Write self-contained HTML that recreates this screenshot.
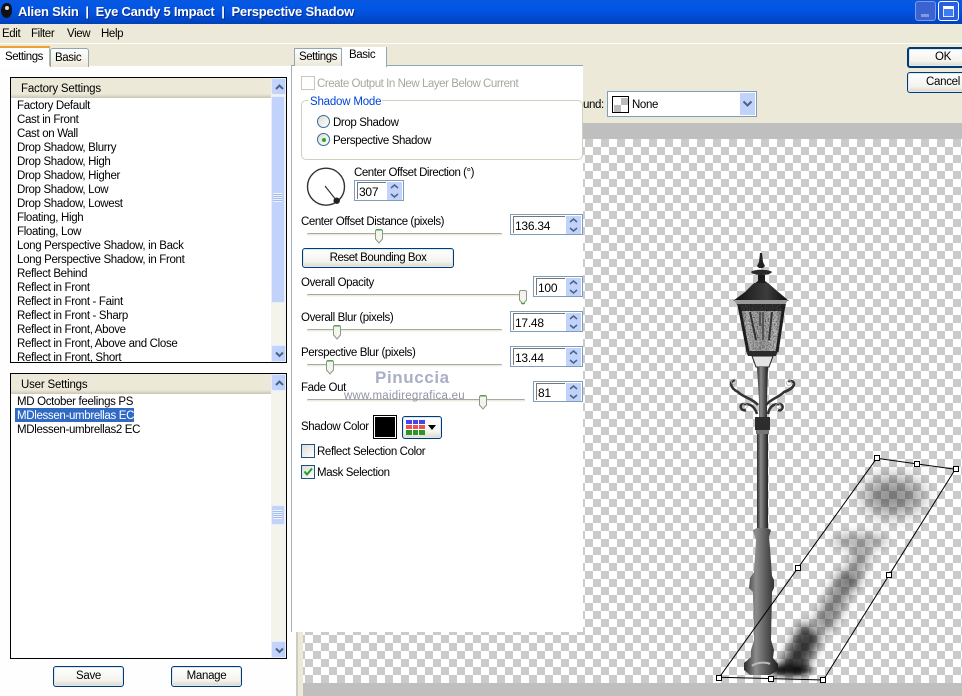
<!DOCTYPE html>
<html><head><meta charset="utf-8"><style>
html,body{margin:0;padding:0;width:962px;height:696px;overflow:hidden;background:#ece9d8}
body{position:relative;font-family:"Liberation Sans",sans-serif;font-size:11.5px;color:#000}
div,span.t{position:absolute;box-sizing:border-box}
.t{white-space:nowrap;line-height:14px;height:14px;margin-top:1px;letter-spacing:-.38px}
.r{left:17px;white-space:nowrap;line-height:14px;height:14px;position:absolute;margin-top:1px;letter-spacing:-.33px}
.btn{border:1px solid #003c74;border-radius:3px;background:linear-gradient(#fff,#f4f3ee 70%,#dcd8c8);text-align:center;line-height:19px;box-shadow:inset 0 0 0 1px #dce7f5;letter-spacing:-.3px}
.sb{background:linear-gradient(90deg,#c3d5fd,#bcd0fb);border:1px solid #e6eefc;border-radius:2px;width:15px;height:17px;left:271px;color:#4d6185;text-align:center}
.sb svg{position:absolute;left:3px;top:5px}
.trk{height:3px;background:#ecebe0;border-top:1px solid #a8a89c;border-bottom:1px solid #f7f7f2;border-radius:2px}
.spin{border:1px solid #7f9db9;background:#fff;height:21px}
.spin i{position:absolute;left:2px;top:1px;right:17px;bottom:1px;border-top:1px solid #777;border-left:1px solid #777;font-style:normal;font-size:12px;line-height:19px;padding-left:1px;letter-spacing:-.25px}
.spin b{position:absolute;right:1px;width:15px;height:9px;background:#c1d3fb}
.spin b svg{position:absolute;left:3px;top:2px}
.cb{width:14px;height:14px;border:1px solid #1c5180;background:linear-gradient(135deg,#dcdcd7,#fff)}
</style></head><body>

<!-- title bar -->
<div style="left:0;top:0;width:962px;height:24px;background:linear-gradient(#0a58dc 0,#0258e6 4px,#0355e4 10px,#0147c8 20px,#0140b8 24px)"></div>
<div style="left:1px;top:3px;width:11px;height:15px;background:#111;border-radius:50% 40% 50% 50%"></div>
<div style="left:5px;top:6px;width:4px;height:4px;background:#ddd;border-radius:50%"></div>
<span class="t" style="left:18px;top:3px;font-size:13px;line-height:16px;height:16px;font-weight:bold;color:#fff;letter-spacing:-.22px;text-shadow:1px 1px 0 #0a2f90">Alien Skin&nbsp; |&nbsp; Eye Candy 5 Impact&nbsp; |&nbsp; Perspective Shadow</span>
<div style="left:915px;top:1px;width:21px;height:20px;background:#3a62d0;border:1px solid #7d9be4;border-radius:3px"><div style="left:5px;top:12px;width:8px;height:3px;background:#7f9be0"></div></div>
<div style="left:938px;top:1px;width:21px;height:20px;background:#2a5fe0;border:1px solid #fff;border-radius:3px"><div style="left:4px;top:4px;width:11px;height:11px;border:1px solid #dfe8ff;border-top:3px solid #fff;background:#3e7cf2"></div></div>

<!-- menu -->
<span class="t" style="left:2px;top:26px">Edit</span>
<span class="t" style="left:31px;top:26px">Filter</span>
<span class="t" style="left:67px;top:26px">View</span>
<span class="t" style="left:101px;top:26px">Help</span>
<div style="left:0;top:43px;width:962px;height:1px;background:#fff"></div>

<!-- preview -->
<div style="left:298px;top:123px;width:664px;height:573px;background:#bfbfbf"></div>
<div style="left:303px;top:139px;width:659px;height:544px;background:repeating-conic-gradient(#cbcbcb 0 25%,#fff 0 50%) 2px 0/16px 16px"></div>
<div style="left:298px;top:632px;width:5px;height:64px;background:#ece9d8"></div>

<svg width="962" height="696" style="position:absolute;left:0;top:0" viewBox="0 0 962 696">
<defs>
<filter id="b1" x="-60%" y="-60%" width="220%" height="220%"><feGaussianBlur stdDeviation="5"/></filter>
<filter id="b2" x="-60%" y="-60%" width="220%" height="220%"><feGaussianBlur stdDeviation="9"/></filter>
<filter id="b3" x="-50%" y="-50%" width="200%" height="200%"><feGaussianBlur stdDeviation="3"/></filter>
<filter id="n" x="0" y="0" width="100%" height="100%"><feTurbulence type="fractalNoise" baseFrequency=".75" numOctaves="2" seed="4"/><feColorMatrix values="0 0 0 0 0 0 0 0 0 0 0 0 0 0 0 1.800 0 0 0 -.55"/><feComposite in2="SourceGraphic" operator="in"/><feMerge><feMergeNode in="SourceGraphic"/><feMergeNode/></feMerge></filter>
<linearGradient id="pole" x1="0" x2="1" y1="0" y2="0"><stop offset="0" stop-color="#2c2c2c"/><stop offset=".35" stop-color="#8c8c8c"/><stop offset=".65" stop-color="#5a5a5a"/><stop offset="1" stop-color="#1e1e1e"/></linearGradient>
<linearGradient id="roof" x1="0" x2="1" y1="0" y2="0"><stop offset="0" stop-color="#111"/><stop offset=".6" stop-color="#3c3c3c"/><stop offset="1" stop-color="#0c0c0c"/></linearGradient>
<linearGradient id="glass" x1="0" x2="1" y1="0" y2="0"><stop offset="0" stop-color="#777"/><stop offset=".2" stop-color="#c4c4c4"/><stop offset=".5" stop-color="#a8a8a8"/><stop offset=".8" stop-color="#c4c4c4"/><stop offset="1" stop-color="#666"/></linearGradient>
</defs>
<!-- shadow -->
<g fill="#000">
<path d="M778 670L802 622L822 636L804 672Z" opacity=".75" filter="url(#b1)"/>
<ellipse cx="790" cy="670" rx="22" ry="6" opacity=".85" filter="url(#b3)"/>
<path d="M812 624L840 570L858 580L830 634Z" opacity=".42" filter="url(#b1)"/>
<path d="M842 580L856 545L872 552L856 590Z" opacity=".34" filter="url(#b1)"/>
<ellipse cx="860" cy="541" rx="28" ry="8" opacity=".28" filter="url(#b1)"/>
<ellipse cx="893" cy="496" rx="30" ry="19" opacity=".42" filter="url(#b2)"/>
</g>
<!-- lamp -->
<path d="M760 253H762L763 262L765 266L763 268H759L757 266L759 262Z" fill="#222"/>
<path d="M751 272C753 269 769 269 772 272C770 276 753 276 751 272Z" fill="#2a2a2a"/>
<path d="M758 275H765L765 281L769 284H754L758 281Z" fill="#1c1c1c"/>
<path d="M754 283H768L776 290L789 301L761 300L733 301L745 292Z" fill="url(#roof)"/>
<path d="M734 300L788 300L785 305L737 305Z" fill="#999"/>
<path d="M738 304L785 304L777 354L748 354Z" fill="url(#glass)" filter="url(#n)"/>
<path d="M737 304L786 304L784 311L739 311Z" fill="#3a3a3a" filter="url(#n)"/>
<path d="M739 305L748 352M784 305L777 352" stroke="#1d1d1d" stroke-width="3" fill="none"/>
<path d="M750 312L756 340M772 312L769 340" stroke="#333" stroke-width="2" fill="none"/>
<path d="M760 312L760 326M763 312L763 340" stroke="#555" stroke-width="2" fill="none"/>
<path d="M746 351H778L776 356H748Z" fill="#2a2a2a"/>
<path d="M752 356H773L769 367H756Z" fill="#e4e4e4" stroke="#222"/>
<path d="M757 367H768L767 400V418H759V400Z" fill="url(#pole)"/>
<g fill="none" stroke="#333" stroke-width="2.600">
<path d="M758 405C752 398 744 398 738 392C730 388 729 381 735 380"/>
<path d="M766 405C772 398 778 398 784 392C796 388 797 380 788 381"/>
<path d="M757 414C754 404 748 404 744 404C738 404 741 412 746 410"/>
<path d="M768 414C770 404 776 404 780 404C785 405 782 412 778 410"/>
</g>
<g fill="none" stroke="#aaa" stroke-width=".8"><circle cx="734" cy="382" r="2.500"/><circle cx="789" cy="383" r="2.500"/><circle cx="745" cy="406" r="2.500"/><circle cx="778" cy="406" r="2.500"/></g>
<path d="M755 417H770V430H755Z" fill="#2d2d2d"/>
<path d="M756 430H769V434H756Z" fill="#777"/>
<path d="M757 434H768V528H757Z" fill="url(#pole)"/>
<path d="M753 530L757 528H767L771 530L769 537L770 548L771 562L772 576L774 580L774 588L772 592L771 640L774 650L773 658L778 664L778 670L770 675H750L744 670L744 663L751 657L751 650L754 640L753 592L749 588L750 578L754 572L755 556L756 540Z" fill="url(#pole)"/>
<path d="M744 664C752 658 770 657 778 664C776 672 768 675 758 675C750 675 745 670 744 664Z" fill="url(#pole)"/>
<path d="M752 666C756 662 766 662 770 664" stroke="#bbb" stroke-width="2" fill="none"/>
<!-- bounding box -->
<path d="M876.700 458.300L955.300 469.300L823.300 680L719.300 677.300Z" fill="none" stroke="#000"/>
<g fill="#fff" stroke="#000">
<rect x="874.500" y="455.500" width="5" height="5"/><rect x="914.500" y="461.500" width="5" height="5"/><rect x="953.500" y="466.500" width="5" height="5"/><rect x="886.500" y="572.500" width="5" height="5"/><rect x="820.500" y="677.500" width="5" height="5"/><rect x="768.500" y="676.500" width="5" height="5"/><rect x="716.500" y="675.500" width="5" height="5"/><rect x="795.500" y="565.500" width="5" height="5"/>
</g>
</svg>

<!-- background combo -->
<span class="t" style="left:583px;top:97px">und:</span>
<div style="left:607px;top:91px;width:150px;height:26px;background:#fff;border:1px solid #7f9db9"></div>
<div style="left:612px;top:96px;width:17px;height:17px;border:1px solid #000;background:linear-gradient(#bbb,#bbb) 8px 1px/7px 7px no-repeat,linear-gradient(#bbb,#bbb) 1px 8px/7px 7px no-repeat,#fff"></div>
<span class="t" style="left:632px;top:97px">None</span>
<div style="left:740px;top:93px;width:15px;height:22px;background:#c1d3fb"><svg width="11" height="8" style="position:absolute;left:2px;top:7px"><path d="M1.500 1.500L5.500 5.500L9.500 1.500" fill="none" stroke="#4d6185" stroke-width="2"/></svg></div>

<!-- OK / Cancel -->
<div class="btn" style="left:907px;top:47px;width:72px;height:21px;border-width:2px;line-height:17px">OK</div>
<div class="btn" style="left:907px;top:72px;width:72px;height:21px;line-height:19px;text-indent:18px;text-align:left">Cancel</div>

<!-- left pane -->
<div style="left:0;top:66px;width:296px;height:630px;background:#fefefe"></div>
<div style="left:296px;top:632px;width:2px;height:64px;background:#cfccbd"></div>
<div style="left:0;top:46px;width:50px;height:21px;background:#fff;border-top:2px solid #f0a030;border-right:1px solid #b4b4a8"></div>
<span class="t" style="left:5px;top:49px;letter-spacing:-.45px">Settings</span>
<div style="left:50px;top:48px;width:39px;height:19px;background:linear-gradient(#fff,#ece9d8);border:1px solid #91a7b4;border-bottom:0;border-radius:3px 3px 0 0"></div>
<span class="t" style="left:55px;top:50px">Basic</span>
<div style="left:0;top:66px;width:50px;height:1px;background:#fff"></div>

<!-- factory list -->
<div style="left:10px;top:77px;width:277px;height:286px;background:#fff;border:1px solid #000;overflow:hidden">
<div style="left:0;top:0;width:260px;height:20px;background:linear-gradient(#ece9d8,#ece9d8 80%,#c9c6b6)"></div>
<span class="t" style="left:10px;top:3px;letter-spacing:-.2px">Factory Settings</span>
<div style="left:260px;top:0;width:15px;height:284px;background:#f4f3ec"></div>
</div>
<div class="sb" style="top:78px"><svg width="9" height="7"><path d="M1 5L4.500 1.500L8 5" fill="none" stroke="#4d6185" stroke-width="2"/></svg></div>
<div style="left:271px;top:96px;width:14px;height:207px;background:#c1d3fb;border:1px solid #e6eefc;border-radius:2px"></div>
<div style="left:273px;top:193px;width:9px;height:9px;background:repeating-linear-gradient(#eef3ff 0 1px,#a5bbe8 1px 2px)"></div>
<div class="sb" style="top:345px"><svg width="9" height="7"><path d="M1 1.500L4.500 5L8 1.500" fill="none" stroke="#4d6185" stroke-width="2"/></svg></div>
<div style="left:11px;top:98px;width:260px;height:264px;overflow:hidden"><div style="left:-11px;top:-98px;width:280px;height:300px">
<span class="r" style="top:98px">Factory Default</span>
<span class="r" style="top:112px">Cast in Front</span>
<span class="r" style="top:126px">Cast on Wall</span>
<span class="r" style="top:140px">Drop Shadow, Blurry</span>
<span class="r" style="top:154px">Drop Shadow, High</span>
<span class="r" style="top:168px">Drop Shadow, Higher</span>
<span class="r" style="top:182px">Drop Shadow, Low</span>
<span class="r" style="top:196px">Drop Shadow, Lowest</span>
<span class="r" style="top:210px">Floating, High</span>
<span class="r" style="top:224px">Floating, Low</span>
<span class="r" style="top:238px">Long Perspective Shadow, in Back</span>
<span class="r" style="top:252px">Long Perspective Shadow, in Front</span>
<span class="r" style="top:266px">Reflect Behind</span>
<span class="r" style="top:280px">Reflect in Front</span>
<span class="r" style="top:294px">Reflect in Front - Faint</span>
<span class="r" style="top:308px">Reflect in Front - Sharp</span>
<span class="r" style="top:322px">Reflect in Front, Above</span>
<span class="r" style="top:336px">Reflect in Front, Above and Close</span>
<span class="r" style="top:350px">Reflect in Front, Short</span>
</div></div>

<!-- user list -->
<div style="left:10px;top:373px;width:277px;height:286px;background:#fff;border:1px solid #000;overflow:hidden">
<div style="left:0;top:0;width:260px;height:20px;background:linear-gradient(#ece9d8,#ece9d8 80%,#c9c6b6)"></div>
<span class="t" style="left:10px;top:3px;letter-spacing:-.2px">User Settings</span>
<div style="left:260px;top:0;width:15px;height:284px;background:#f4f3ec"></div>
</div>
<div class="sb" style="top:374px"><svg width="9" height="7"><path d="M1 5L4.500 1.500L8 5" fill="none" stroke="#4d6185" stroke-width="2"/></svg></div>
<div style="left:271px;top:505px;width:14px;height:20px;background:#c1d3fb;border:1px solid #e6eefc;border-radius:2px"></div>
<div style="left:273px;top:510px;width:9px;height:9px;background:repeating-linear-gradient(#eef3ff 0 1px,#a5bbe8 1px 2px)"></div>
<div class="sb" style="top:641px"><svg width="9" height="7"><path d="M1 1.500L4.500 5L8 1.500" fill="none" stroke="#4d6185" stroke-width="2"/></svg></div>
<div style="left:15px;top:408px;width:119px;height:14px;background:#316ac5"></div>
<span class="r" style="top:394px">MD October feelings PS</span>
<span class="r" style="top:408px;color:#fff">MDlessen-umbrellas EC</span>
<span class="r" style="top:422px">MDlessen-umbrellas2 EC</span>

<div class="btn" style="left:53px;top:666px;width:71px;height:21px">Save</div>
<div class="btn" style="left:171px;top:666px;width:71px;height:21px">Manage</div>

<!-- basic panel -->
<div style="left:291px;top:65px;width:292px;height:567px;background:#fff;border-left:1px solid #a6b0b8;border-top:1px solid #91a7b4"></div>
<div style="left:294px;top:48px;width:48px;height:18px;background:linear-gradient(#fff,#ece9d8);border:1px solid #91a7b4;border-bottom:0"></div>
<span class="t" style="left:299px;top:49px;letter-spacing:-.45px">Settings</span>
<div style="left:342px;top:47px;width:45px;height:20px;background:#fff;border-right:1px solid #91a7b4"></div>
<span class="t" style="left:349px;top:47px">Basic</span>

<div class="cb" style="left:301px;top:76px;border-color:#c9c7ba;background:#fff"></div>
<span class="t" style="left:317px;top:76px;color:#a8a79b;letter-spacing:-.45px">Create Output In New Layer Below Current</span>

<div style="left:301px;top:100px;width:282px;height:60px;border:1px solid #d0d0bf;border-radius:5px"></div>
<div style="left:308px;top:96px;width:74px;height:10px;background:#fff"></div>
<span class="t" style="left:310px;top:94px;color:#0046d5;letter-spacing:-.2px">Shadow Mode</span>
<div style="left:317px;top:115px;width:13px;height:13px;border-radius:50%;border:1px solid #3a6a92;background:linear-gradient(135deg,#dcdcd7,#fff)"></div>
<span class="t" style="left:333px;top:115px">Drop Shadow</span>
<div style="left:317px;top:133px;width:13px;height:13px;border-radius:50%;border:1px solid #3a6a92;background:linear-gradient(135deg,#dcdcd7,#fff)"><div style="left:3.500px;top:3.500px;width:4px;height:4px;border-radius:50%;background:#2aa82a"></div></div>
<span class="t" style="left:333px;top:133px">Perspective Shadow</span>

<svg width="44" height="44" style="position:absolute;left:304px;top:165px"><circle cx="22" cy="21.700" r="18.500" fill="#fff" stroke="#333" stroke-width="1.400"/><path d="M21 21L32.700 35.700" stroke="#333" stroke-width="1.200"/><circle cx="32.700" cy="35.700" r="3.200" fill="#222"/></svg>
<span class="t" style="left:354px;top:165px;letter-spacing:-.45px">Center Offset Direction (°)</span>
<div class="spin" style="left:354px;top:180px;width:50px"><i>307</i><b style="top:1px"><svg width="9" height="5"><path d="M1 4L4.500 1L8 4" fill="none" stroke="#4d6185" stroke-width="1.500"/></svg></b><b style="top:10px"><svg width="9" height="5"><path d="M1 1L4.500 4L8 1" fill="none" stroke="#4d6185" stroke-width="1.500"/></svg></b></div>

<span class="t" style="left:301px;top:214px;letter-spacing:-.43px">Center Offset Distance (pixels)</span>
<div class="trk" style="left:307px;top:233px;width:195px"></div>
<svg width="8" height="15" style="position:absolute;left:375px;top:229px"><path d="M.5 1.500L1.500 .5H6.500L7.500 1.500V10L4 14L.5 10Z" fill="#f4f3ec" stroke="#8a9a8a"/><path d="M1 1H7" stroke="#2aa82a"/></svg>
<div class="spin" style="left:510px;top:214px;width:73px"><i>136.34</i><b style="top:1px"><svg width="9" height="5"><path d="M1 4L4.500 1L8 4" fill="none" stroke="#4d6185" stroke-width="1.500"/></svg></b><b style="top:10px"><svg width="9" height="5"><path d="M1 1L4.500 4L8 1" fill="none" stroke="#4d6185" stroke-width="1.500"/></svg></b></div>

<div class="btn" style="left:302px;top:248px;width:152px;height:20px;line-height:18px;letter-spacing:-.45px">Reset Bounding Box</div>

<span class="t" style="left:301px;top:275px">Overall Opacity</span>
<div class="trk" style="left:307px;top:294px;width:220px"></div>
<svg width="8" height="15" style="position:absolute;left:519px;top:290px"><path d="M.5 1.500L1.500 .5H6.500L7.500 1.500V10L4 14L.5 10Z" fill="#f4f3ec" stroke="#8a9a8a"/><path d="M2 13L4 14L6 13" stroke="#2aa82a" fill="none"/></svg>
<div class="spin" style="left:533px;top:276px;width:50px"><i>100</i><b style="top:1px"><svg width="9" height="5"><path d="M1 4L4.500 1L8 4" fill="none" stroke="#4d6185" stroke-width="1.500"/></svg></b><b style="top:10px"><svg width="9" height="5"><path d="M1 1L4.500 4L8 1" fill="none" stroke="#4d6185" stroke-width="1.500"/></svg></b></div>

<span class="t" style="left:301px;top:310px">Overall Blur (pixels)</span>
<div class="trk" style="left:307px;top:329px;width:195px"></div>
<svg width="8" height="15" style="position:absolute;left:333px;top:325px"><path d="M.5 1.500L1.500 .5H6.500L7.500 1.500V10L4 14L.5 10Z" fill="#f4f3ec" stroke="#8a9a8a"/><path d="M1 1H7" stroke="#2aa82a"/></svg>
<div class="spin" style="left:510px;top:311px;width:73px"><i>17.48</i><b style="top:1px"><svg width="9" height="5"><path d="M1 4L4.500 1L8 4" fill="none" stroke="#4d6185" stroke-width="1.500"/></svg></b><b style="top:10px"><svg width="9" height="5"><path d="M1 1L4.500 4L8 1" fill="none" stroke="#4d6185" stroke-width="1.500"/></svg></b></div>

<span class="t" style="left:301px;top:345px">Perspective Blur (pixels)</span>
<div class="trk" style="left:307px;top:364px;width:195px"></div>
<svg width="8" height="15" style="position:absolute;left:326px;top:360px"><path d="M.5 1.500L1.500 .5H6.500L7.500 1.500V10L4 14L.5 10Z" fill="#f4f3ec" stroke="#8a9a8a"/><path d="M1 1H7" stroke="#2aa82a"/></svg>
<div class="spin" style="left:510px;top:346px;width:73px"><i>13.44</i><b style="top:1px"><svg width="9" height="5"><path d="M1 4L4.500 1L8 4" fill="none" stroke="#4d6185" stroke-width="1.500"/></svg></b><b style="top:10px"><svg width="9" height="5"><path d="M1 1L4.500 4L8 1" fill="none" stroke="#4d6185" stroke-width="1.500"/></svg></b></div>

<span class="t" style="left:301px;top:380px">Fade Out</span>
<div class="trk" style="left:307px;top:399px;width:218px"></div>
<svg width="8" height="15" style="position:absolute;left:479px;top:395px"><path d="M.5 1.500L1.500 .5H6.500L7.500 1.500V10L4 14L.5 10Z" fill="#f4f3ec" stroke="#8a9a8a"/><path d="M1 1H7" stroke="#2aa82a"/></svg>
<div class="spin" style="left:533px;top:381px;width:50px"><i>81</i><b style="top:1px"><svg width="9" height="5"><path d="M1 4L4.500 1L8 4" fill="none" stroke="#4d6185" stroke-width="1.500"/></svg></b><b style="top:10px"><svg width="9" height="5"><path d="M1 1L4.500 4L8 1" fill="none" stroke="#4d6185" stroke-width="1.500"/></svg></b></div>

<!-- watermark -->
<span class="t" style="left:375px;top:367px;font-size:17px;line-height:20px;height:20px;color:#a9afc6;font-weight:bold;letter-spacing:.6px">Pinuccia</span>
<span class="t" style="left:344px;top:388px;font-size:11.500px;color:#8f93a8;letter-spacing:.25px">www.maidiregrafica.eu</span>

<span class="t" style="left:301px;top:419px">Shadow Color</span>
<div style="left:373px;top:415px;width:24px;height:24px;background:#000;border:1px solid #000;box-shadow:inset 0 0 0 1px #fff"></div>
<div class="btn" style="left:402px;top:416px;width:40px;height:23px"></div>
<div style="left:406px;top:420px;width:19px;height:15px;background:linear-gradient(90deg,#0000 0 6px,#fff 6px 7px,#0000 7px 12px,#fff 12px 13px,#0000 13px),linear-gradient(#4444f0 0 4px,#fff 4px 5px,#f05050 5px 9px,#fff 9px 10px,#2a962a 10px)"></div>
<svg width="8" height="5" style="position:absolute;left:428px;top:425px"><path d="M0 0H8L4 5Z" fill="#000"/></svg>

<div class="cb" style="left:301px;top:444px"></div>
<span class="t" style="left:317px;top:444px">Reflect Selection Color</span>
<div class="cb" style="left:301px;top:465px"><svg width="12" height="12" style="position:absolute;left:0;top:0"><path d="M2.500 5.500L5 8.500L10 2.500" fill="none" stroke="#21a121" stroke-width="2"/></svg></div>
<span class="t" style="left:317px;top:465px">Mask Selection</span>

</body></html>
